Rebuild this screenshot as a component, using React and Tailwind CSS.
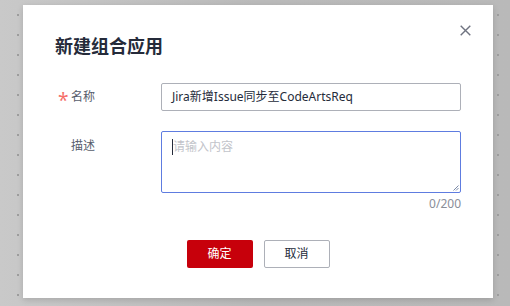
const dots = Array.from({ length: 15 });

function DotColumn({ className }) {
    return (
        <div className={`flex flex-col gap-[18px] pt-[14px] ${className}`}>
            {dots.map((_, i) => (
                <span key={i} className="block w-[2px] h-[2px] bg-[#9e9e9e]" />
            ))}
        </div>
    );
}

export default function App() {
    return (
        <div
            className="w-[510px] h-[306px] overflow-hidden flex bg-gradient-to-r from-[#c9c9c9] via-[#bababa] to-[#b9b9b9]"
            style={{ fontFamily: '"Noto Sans", "Noto Sans CJK SC", sans-serif' }}
        >
            {/* Left backdrop strip */}
            <div className="w-[23px] shrink-0 flex pl-[17px]">
                <DotColumn />
            </div>

            {/* Dialog */}
            <div className="relative w-[470px] h-[293px] mt-[5px] bg-white shrink-0 shadow-[0_2px_6px_rgba(0,0,0,0.15)]">
                <button className="absolute top-[20px] right-[22px]">
                    <svg width="11" height="11" viewBox="0 0 11 11">
                        <path d="M0.7 0.7L10.3 10.3M10.3 0.7L0.7 10.3" stroke="#6f7380" strokeWidth="1.4" />
                    </svg>
                </button>

                <h2 className="pt-[29px] pl-[32px] text-[18px] leading-[24px] font-bold text-[#252b3a]">
                    新建组合应用
                </h2>

                {/* Name */}
                <div className="flex items-center mt-[25px]">
                    <div className="w-[138px] pl-[35px] flex items-center text-[12px] text-[#575d6c]">
                        <span className="text-[#f66f6a] text-[19px] leading-none w-[13px] mt-[6px]">*</span>
                        <span>名称</span>
                    </div>
                    <div className="w-[300px] h-[28px] border border-[#adb0b8] rounded-[2px] px-[10px] flex items-center text-[12px] text-[#252b3a]">
                        Jira新增Issue同步至CodeArtsReq
                    </div>
                </div>

                {/* Description */}
                <div className="flex items-start mt-[20px]">
                    <div className="w-[138px] pl-[48px] pt-[6px] text-[12px] leading-[18px] text-[#575d6c]">
                        描述
                    </div>
                    <div className="flex flex-col w-[300px]">
                        <div className="relative h-[62px] border border-[#5e7ce0] rounded-[2px] px-[11px] pt-[6px] text-[12px] leading-[18px] text-[#c2c4ca]">
                            <span className="absolute left-[10px] top-[7px] w-[1px] h-[16px] bg-[#252b3a]" />
                            请输入内容
                            <svg className="absolute right-[1px] bottom-[1px]" width="7" height="7" viewBox="0 0 7 7">
                                <path d="M6.5 1.5L1.5 6.5M6.5 4L4 6.5" stroke="#7b8aa8" strokeWidth="1" />
                            </svg>
                        </div>
                        <div className="text-right text-[12px] leading-[18px] mt-[2px] text-[#8a8e99]">0/200</div>
                    </div>
                </div>

                {/* Actions */}
                <div className="flex justify-center gap-[11px] mt-[27px]">
                    <button className="w-[66px] h-[28px] rounded-[2px] bg-[#c7000b] text-white text-[12px]">
                        确定
                    </button>
                    <button className="w-[66px] h-[28px] rounded-[2px] border border-[#adb0b8] bg-white text-[#252b3a] text-[12px]">
                        取消
                    </button>
                </div>
            </div>

            {/* Right backdrop strip */}
            <div className="flex-1 flex pl-[4px]">
                <DotColumn />
            </div>
        </div>
    );
}
